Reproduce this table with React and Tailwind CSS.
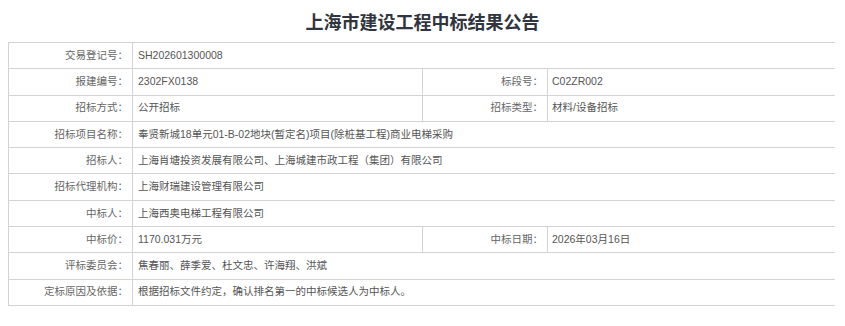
import React from 'react';

const rows = [
  [['交易登记号', 'SH202601300008']],
  [['报建编号', '2302FX0138'], ['标段号', 'C02ZR002']],
  [['招标方式', '公开招标'], ['招标类型', '材料/设备招标']],
  [['招标项目名称', '奉贤新城18单元01-B-02地块(暂定名)项目(除桩基工程)商业电梯采购']],
  [['招标人', '上海肖塘投资发展有限公司、上海城建市政工程（集团）有限公司']],
  [['招标代理机构', '上海财瑞建设管理有限公司']],
  [['中标人', '上海西奥电梯工程有限公司']],
  [['中标价', '1170.031万元'], ['中标日期', '2026年03月16日']],
  [['评标委员会', '焦春丽、薛季爱、杜文忠、许海翔、洪斌']],
  [['定标原因及依据', '根据招标文件约定，确认排名第一的中标候选人为中标人。']],
];

const Label = ({ text, wide }) => (
  <div className={`${wide ? 'w-[125px]' : 'w-[124px]'} shrink-0 h-full flex items-center justify-end pr-[4px] border-r border-[#d3d3d3] text-[#666]`}>
    {text}：
  </div>
);

export default function App() {
  return (
    <div className="bg-white w-[845px] h-[326px] font-['Liberation_Sans','Noto_Sans_CJK_SC',sans-serif]">
      {/* Title */}
      <div className="h-[42px] flex items-center justify-center">
        <h1 className="text-[18px] font-bold text-[#303540] font-['Noto_Sans_CJK_SC',sans-serif] leading-none">
          上海市建设工程中标结果公告
        </h1>
      </div>

      {/* Table */}
      <div className="ml-[8px] w-[827px] border-t border-l border-[#d3d3d3] text-[10.5px]">
        {rows.map((row, i) => (
          <div key={i} className="h-[26.3px] flex border-b border-[#d3d3d3]">
            <Label text={row[0][0]} />
            {row.length === 1 ? (
              <div className="flex-1 flex items-center pl-[5px] text-[#555]">{row[0][1]}</div>
            ) : (
              <>
                <div className="w-[290px] shrink-0 flex items-center pl-[5px] border-r border-[#d3d3d3] text-[#555]">{row[0][1]}</div>
                <Label text={row[1][0]} wide />
                <div className="flex-1 flex items-center pl-[4px] text-[#555]">{row[1][1]}</div>
              </>
            )}
          </div>
        ))}
      </div>
    </div>
  );
}
